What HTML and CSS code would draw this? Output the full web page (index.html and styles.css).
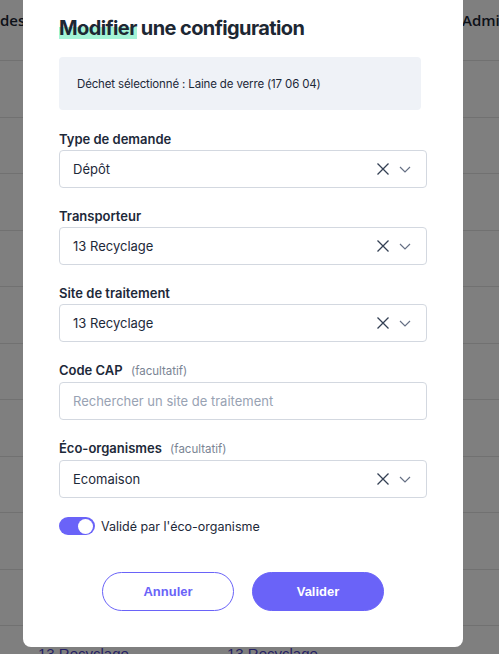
FILE: index.html
```html
<!DOCTYPE html>
<html lang="fr">
<head>
<meta charset="utf-8">
<title>Modifier une configuration</title>
<link rel="stylesheet" href="styles.css">
</head>
<body>
<div class="table">
  <div class="thead"><span class="th th-first">des</span><span class="th th-admin">Admin</span></div>
  <div class="row"></div>
  <div class="row"></div>
  <div class="row"></div>
  <div class="row"></div>
  <div class="row"></div>
  <div class="row"></div>
  <div class="row"></div>
  <div class="row"></div>
  <div class="row"></div>
  <div class="row"></div>
  <div class="row"><span class="cell c1">13 Recyclage</span><span class="cell c2">13 Recyclage</span></div>
</div>
<div class="overlay"></div>
<div class="modal">
  <h1 class="title"><span class="hl">Modifier</span> une configuration</h1>
  <div class="info">Déchet sélectionné : Laine de verre (17 06 04)</div>
  <div class="form">
    <div class="field">
      <div class="label">Type de demande</div>
      <div class="select">
        <span class="value">Dépôt</span>
        <span class="icons">
          <svg class="ic-x" width="14" height="14" viewBox="0 0 14 14"><path d="M1.5 1.5L12.5 12.5M12.5 1.5L1.5 12.5" stroke="#344054" stroke-width="1.3" fill="none"/></svg>
          <svg class="ic-chev" width="12" height="7" viewBox="0 0 12 7"><path d="M1 1l5 5 5-5" fill="none" stroke="#667085" stroke-width="1.2"/></svg>
        </span>
      </div>
    </div>
    <div class="field">
      <div class="label">Transporteur</div>
      <div class="select">
        <span class="value">13 Recyclage</span>
        <span class="icons">
          <svg class="ic-x" width="14" height="14" viewBox="0 0 14 14"><path d="M1.5 1.5L12.5 12.5M12.5 1.5L1.5 12.5" stroke="#344054" stroke-width="1.3" fill="none"/></svg>
          <svg class="ic-chev" width="12" height="7" viewBox="0 0 12 7"><path d="M1 1l5 5 5-5" fill="none" stroke="#667085" stroke-width="1.2"/></svg>
        </span>
      </div>
    </div>
    <div class="field">
      <div class="label">Site de traitement</div>
      <div class="select">
        <span class="value">13 Recyclage</span>
        <span class="icons">
          <svg class="ic-x" width="14" height="14" viewBox="0 0 14 14"><path d="M1.5 1.5L12.5 12.5M12.5 1.5L1.5 12.5" stroke="#344054" stroke-width="1.3" fill="none"/></svg>
          <svg class="ic-chev" width="12" height="7" viewBox="0 0 12 7"><path d="M1 1l5 5 5-5" fill="none" stroke="#667085" stroke-width="1.2"/></svg>
        </span>
      </div>
    </div>
    <div class="field">
      <div class="label">Code CAP <span class="opt">(facultatif)</span></div>
      <div class="select">
        <span class="value placeholder">Rechercher un site de traitement</span>
      </div>
    </div>
    <div class="field">
      <div class="label">Éco-organismes <span class="opt">(facultatif)</span></div>
      <div class="select">
        <span class="value">Ecomaison</span>
        <span class="icons">
          <svg class="ic-x" width="14" height="14" viewBox="0 0 14 14"><path d="M1.5 1.5L12.5 12.5M12.5 1.5L1.5 12.5" stroke="#344054" stroke-width="1.3" fill="none"/></svg>
          <svg class="ic-chev" width="12" height="7" viewBox="0 0 12 7"><path d="M1 1l5 5 5-5" fill="none" stroke="#667085" stroke-width="1.2"/></svg>
        </span>
      </div>
    </div>
  </div>
  <div class="toggle-row">
    <span class="toggle"><span class="knob"></span></span>
    <span class="toggle-label">Validé par l'éco-organisme</span>
  </div>
  <div class="actions">
    <button class="btn btn-outline">Annuler</button>
    <button class="btn btn-primary">Valider</button>
  </div>
</div>
</body>
</html>
```

FILE: styles.css
```css
html, body {
  margin: 0;
  padding: 0;
  height: 100%;
  overflow: hidden;
  background: #ffffff;
}

body {
  font-family: Inter, "Noto Sans", sans-serif;
  color: #1d2939;
}

.table {
  display: flex;
  flex-direction: column;
}

.thead {
  box-sizing: border-box;
  height: 61px;
  border-bottom: 1px solid #e2e2e2;
  display: flex;
  align-items: flex-start;
  padding-top: 10px;
  font-family: "Open Sans", sans-serif;
  font-weight: 600;
  font-size: 15px;
  line-height: 20px;
  color: #1a2433;
}

.th-first {
  width: 462px;
  flex: none;
}

.th-admin {
  white-space: nowrap;
}

.row {
  box-sizing: border-box;
  height: 56.5px;
  border-bottom: 1px solid #e2e2e2;
  display: flex;
  align-items: center;
  font-family: "Liberation Sans", Arial, sans-serif;
  font-size: 15px;
  color: #4b44c9;
}

.c1 {
  margin-left: 38px;
  width: 189px;
  flex: none;
}

.overlay {
  position: fixed;
  inset: 0;
  background: rgba(0, 0, 0, 0.5);
}

.modal {
  position: absolute;
  left: 23px;
  top: -22px;
  width: 440px;
  box-sizing: border-box;
  padding: 36px 36px 36px 36px;
  background: #ffffff;
  border-radius: 8px;
}

.title {
  margin: 0;
  font-size: 20px;
  line-height: 28px;
  font-weight: 700;
  color: #1d2733;
  letter-spacing: -0.6px;
}

.hl {
  background: linear-gradient(to bottom, transparent 44%, #a4f4d6 44%, #a4f4d6 96%, transparent 96%);
}

.info {
  margin-top: 15px;
  width: 362px;
  height: 53px;
  box-sizing: border-box;
  padding-left: 18px;
  display: flex;
  align-items: center;
  background: #eff2f7;
  border-radius: 4px;
  font-size: 11.5px;
  letter-spacing: -0.15px;
  color: #1d2939;
}

.form {
  margin-top: 20px;
  display: flex;
  flex-direction: column;
  gap: 19px;
}

.field {
  display: flex;
  flex-direction: column;
}

.label {
  font-size: 13px;
  line-height: 18px;
  font-weight: 600;
  color: #1d2939;
  margin-bottom: 2px;
}

.opt {
  font-size: 11.5px;
  font-weight: 400;
  color: #7a8494;
  margin-left: 5px;
}

.select {
  box-sizing: border-box;
  height: 38px;
  border: 1px solid #d3d8e0;
  border-radius: 4px;
  display: flex;
  align-items: center;
  justify-content: space-between;
  padding: 0 15px 0 13px;
}

.value {
  font-size: 13px;
  color: #1d2939;
}

.placeholder {
  color: #98a2b3;
}

.icons {
  display: flex;
  align-items: center;
  gap: 9px;
}

.ic-x,
.ic-chev {
  display: block;
}

.toggle-row {
  margin-top: 19px;
  display: flex;
  align-items: center;
  gap: 6px;
}

.toggle {
  box-sizing: border-box;
  width: 36px;
  height: 18px;
  border-radius: 9px;
  background: #6a63f8;
  display: flex;
  align-items: center;
  justify-content: flex-end;
  padding: 0 2px;
}

.knob {
  width: 15px;
  height: 15px;
  border-radius: 50%;
  background: #ffffff;
}

.toggle-label {
  font-size: 12.5px;
  color: #1d2939;
}

.actions {
  margin-top: 37px;
  display: flex;
  justify-content: center;
  gap: 18px;
}

.btn {
  box-sizing: border-box;
  width: 132px;
  height: 39px;
  border-radius: 20px;
  font-family: "Liberation Sans", Arial, sans-serif;
  font-weight: 700;
  font-size: 13px;
  cursor: pointer;
}

.btn-outline {
  background: #ffffff;
  border: 1px solid #6a63f8;
  color: #6a63f8;
}

.btn-primary {
  background: #6a63f8;
  border: 1px solid #6a63f8;
  color: #ffffff;
}
```
